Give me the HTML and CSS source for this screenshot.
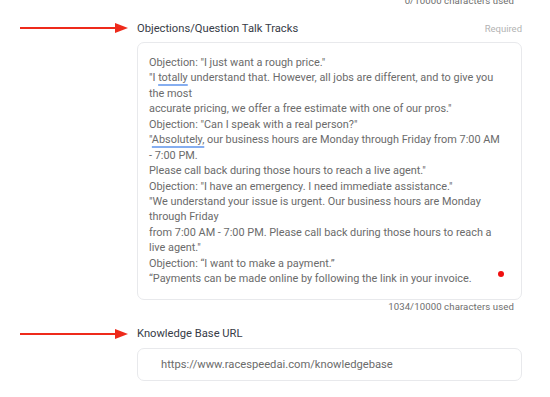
FILE: index.html
```html
<!DOCTYPE html>
<html lang="en">
<head>
    <meta charset="UTF-8">
    <meta name="viewport" content="width=device-width, initial-scale=1.0">
    <title>Talk Tracks</title>
    <link rel="stylesheet" href="styles.css">
</head>
<body>
    <div class="page">
        <div class="counter counter-top">0/10000 characters used</div>

        <div class="field-head">
            <svg class="arrow" width="108" height="12" viewBox="0 0 108 12">
                <line x1="0" y1="6" x2="97" y2="6" stroke="#ee2a1b" stroke-width="2"/>
                <polygon points="95,1 108,6 95,11" fill="#ee2a1b"/>
            </svg>
            <label class="field-label">Objections/Question Talk Tracks</label>
            <span class="required">Required</span>
        </div>
        <div class="text-box">Objection: "I just want a rough price."
"I <span class="spell">totally</span> understand that. However, all jobs are different, and to give you the most
accurate pricing, we offer a free estimate with one of our pros."
Objection: "Can I speak with a real person?"
"<span class="spell">Absolutely,</span> our business hours are Monday through Friday from 7:00 AM - 7:00 PM.
Please call back during those hours to reach a live agent."
Objection: "I have an emergency. I need immediate assistance."
"We understand your issue is urgent. Our business hours are Monday through Friday
from 7:00 AM - 7:00 PM. Please call back during those hours to reach a live agent."
Objection: “I want to make a payment.”
“Payments can be made online by following the link in your invoice.<span class="dot"></span></div>
        <div class="counter">1034/10000 characters used</div>

        <div class="field-head field-head-second">
            <svg class="arrow" width="108" height="12" viewBox="0 0 108 12">
                <line x1="0" y1="6" x2="97" y2="6" stroke="#ee2a1b" stroke-width="2"/>
                <polygon points="95,1 108,6 95,11" fill="#ee2a1b"/>
            </svg>
            <label class="field-label">Knowledge Base URL</label>
        </div>
        <div class="input-box">https://www.racespeedai.com/knowledgebase</div>
    </div>
</body>
</html>
```

FILE: styles.css
```css
body {
    margin: 0;
    background: #ffffff;
    font-family: Roboto, "Liberation Sans", sans-serif;
}
.page {
    margin-left: 137px;
    width: 385px;
}
.counter {
    font-size: 9.6px;
    line-height: 13px;
    color: #6e6e6e;
    text-align: right;
    padding-right: 8px;
    letter-spacing: 0.1px;
}
.counter-top {
    margin-top: -6px;
}
.field-head {
    position: relative;
    display: flex;
    justify-content: space-between;
    align-items: center;
    margin-top: 13px;
    height: 16px;
}
.field-head-second {
    margin-top: 13px;
}
.arrow {
    position: absolute;
    left: -117px;
    top: 2px;
}
.field-label {
    font-size: 11.2px;
    color: #373c47;
}
.required {
    font-size: 9.5px;
    color: #b3b3b3;
}
.text-box {
    position: relative;
    margin-top: 6px;
    border: 1px solid #e8e9ec;
    border-radius: 7px;
    padding: 12px 21px 12px 11px;
    font-size: 10.9px;
    line-height: 15.43px;
    color: #6b6b6b;
    white-space: pre-wrap;
}
.spell {
    text-decoration: underline;
    text-decoration-color: #86aef0;
    text-decoration-thickness: 2px;
    text-underline-offset: 3px;
}
.dot {
    position: absolute;
    left: 360px;
    top: 228px;
    width: 6px;
    height: 6px;
    border-radius: 50%;
    background: #f00f0f;
}
.input-box {
    margin-top: 6px;
    height: 31px;
    border: 1px solid #e8e9ec;
    border-radius: 7px;
    padding-left: 23px;
    display: flex;
    align-items: center;
    font-size: 11.2px;
    color: #6b6b6b;
}
```
